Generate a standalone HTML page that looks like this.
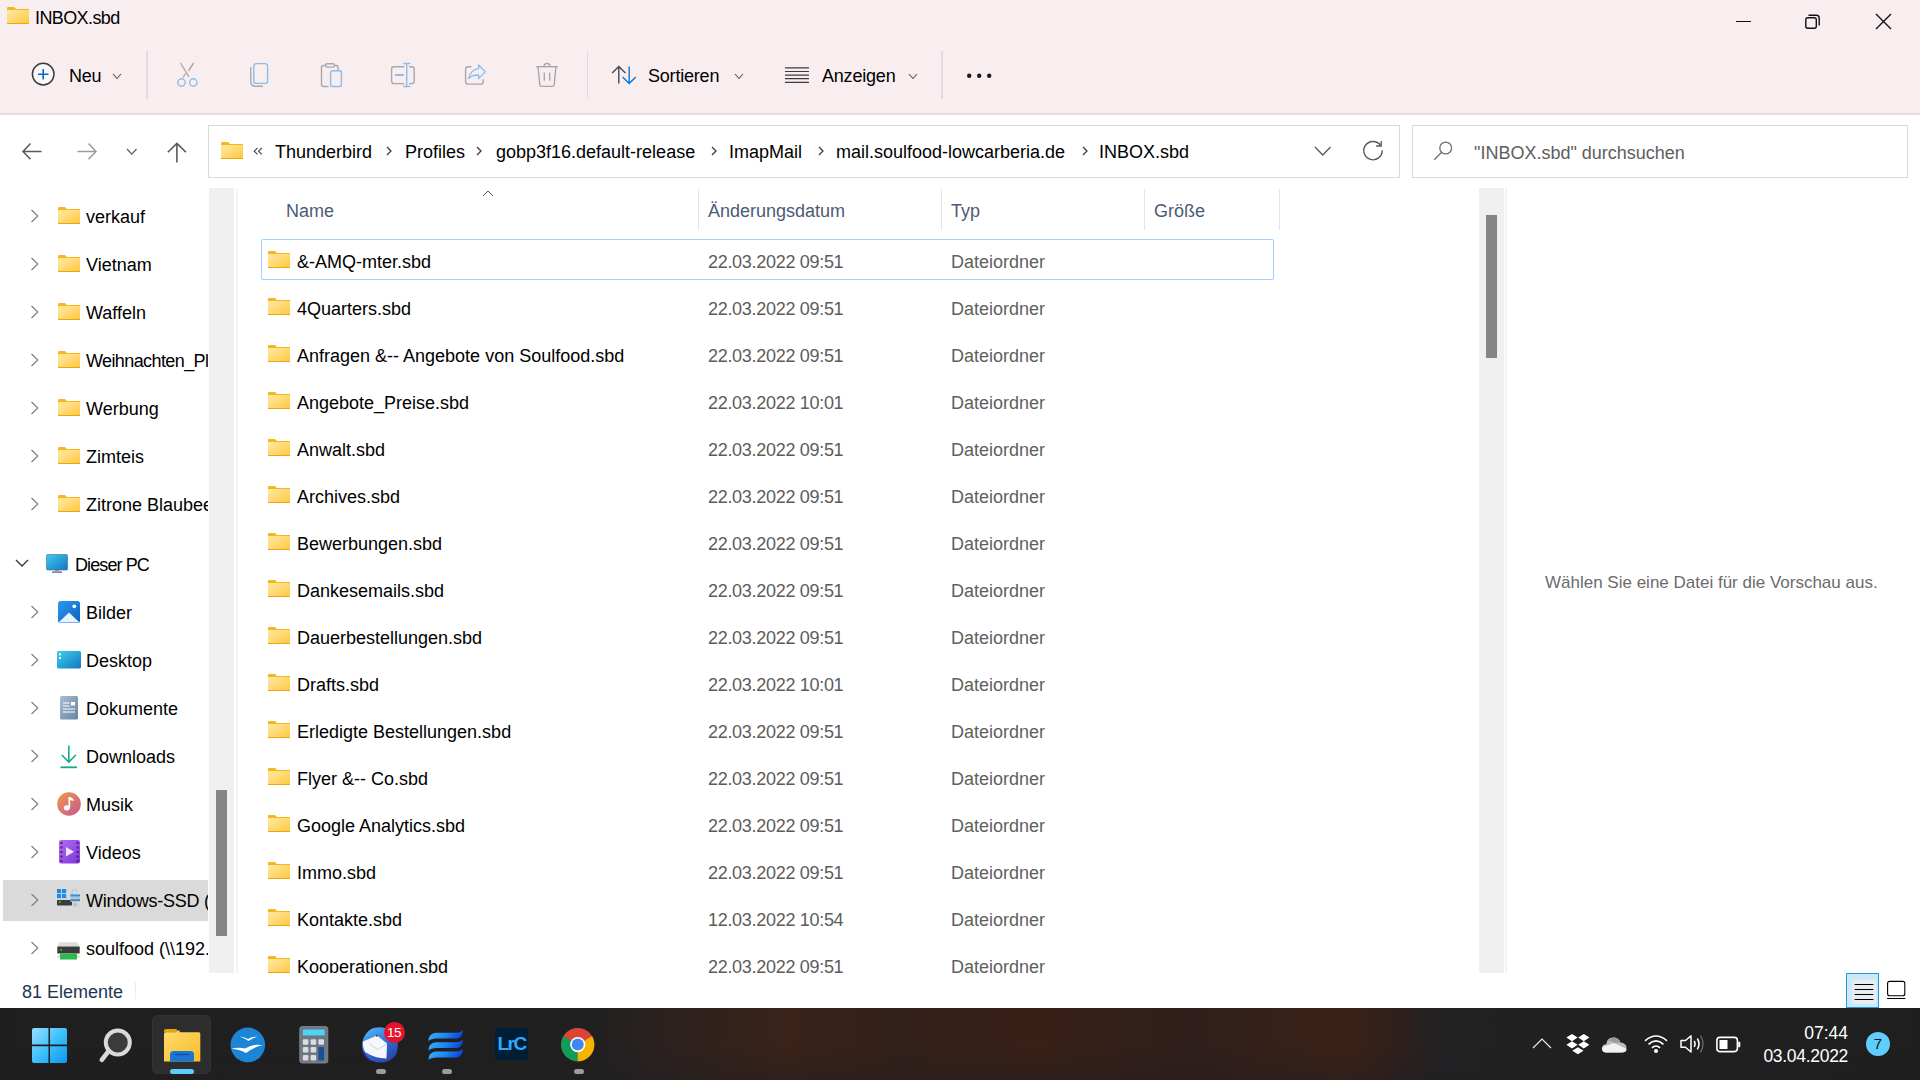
<!DOCTYPE html>
<html><head><meta charset="utf-8"><style>
html,body{margin:0;padding:0;width:1920px;height:1080px;overflow:hidden;background:#fff;font-family:"Liberation Sans",sans-serif}
.t{position:absolute;white-space:nowrap;line-height:20px;font-family:"Liberation Sans",sans-serif}
svg{overflow:visible}
</style></head><body>
<div style="position:absolute;left:0;top:0;width:1920px;height:113px;background:#F8EEF0"></div>
<div style="position:absolute;left:0;top:113px;width:1920px;height:2px;background:#E6DCDE"></div>
<svg style="position:absolute;left:7px;top:7px" width="22" height="17" viewBox="0 0 22 17"><defs><linearGradient id="fg7_7" x1="0" y1="0" x2="1" y2="1"><stop offset="0" stop-color="#FFE9A6"/><stop offset="1" stop-color="#FFC83D"/></linearGradient></defs><path d="M0 1.2 Q0 0 1.2 0 H7 L9 2 H22 V4 H0Z" fill="#F5B81C"/><rect x="0" y="3" width="22" height="14" rx="0.8" fill="url(#fg7_7)"/><rect x="0" y="16" width="22" height="1" fill="#E9A718"/></svg>
<div class="t" style="left:35px;top:8px;font-size:18px;color:#000;letter-spacing:-0.6px">INBOX.sbd</div>
<div style="position:absolute;left:1736px;top:21px;width:15px;height:1.3px;background:#111"></div>
<svg style="position:absolute;left:1800px;top:10px" width="26" height="24" viewBox="0 0 26 24"><rect x="5.8" y="7.8" width="10.5" height="10.5" rx="2" fill="none" stroke="#111" stroke-width="1.4"/><path d="M8.5 5.2 H16.5 Q19.2 5.2 19.2 8 V15.5" fill="none" stroke="#111" stroke-width="1.4"/></svg>
<svg style="position:absolute;left:1872px;top:10px" width="24" height="24" viewBox="0 0 24 24"><path d="M4 4 L19 19 M19 4 L4 19" stroke="#111" stroke-width="1.4"/></svg>
<svg style="position:absolute;left:30px;top:61px" width="27" height="27" viewBox="0 0 27 27"><circle cx="13.2" cy="13.1" r="10.8" fill="#FBF8F9" stroke="#3A3A3A" stroke-width="1.5"/><path d="M13.2 8 V18.5 M8 13.2 H18.5" stroke="#0B6CC9" stroke-width="1.6"/></svg>
<div class="t" style="left:69px;top:66px;font-size:18px;color:#000;letter-spacing:-0.3px">Neu</div>
<svg style="position:absolute;left:112px;top:72.5px" width="10" height="6.5" viewBox="-1 -1 10 6.5"><path d="M0 0 L4.0 4.5 L8 0" fill="none" stroke="#555" stroke-width="1.1"/></svg>
<div style="position:absolute;left:146px;top:51px;width:1.5px;height:48px;background:#E2DADC"></div>
<svg style="position:absolute;left:174px;top:60px" width="26" height="30" viewBox="0 0 26 30"><path d="M6.5 3 L15 17 M19.6 3 L14.5 11" stroke="#ABA7A8" stroke-width="1.4"/><path d="M11.5 13.5 L9 17.5" stroke="#ABA7A8" stroke-width="1.4"/><circle cx="7.5" cy="22.5" r="3.7" fill="none" stroke="#8CBDE8" stroke-width="1.4"/><circle cx="19.3" cy="22.5" r="3.7" fill="none" stroke="#8CBDE8" stroke-width="1.4"/></svg>
<svg style="position:absolute;left:246px;top:59px" width="28" height="30" viewBox="0 0 28 30"><path d="M4.8 8 V22.5 Q4.8 27.3 9.6 27.3 H17" fill="none" stroke="#ABA7A8" stroke-width="1.4"/><rect x="7.8" y="4.6" width="13.8" height="19.8" rx="2.4" fill="none" stroke="#8CBDE8" stroke-width="1.4"/></svg>
<svg style="position:absolute;left:316px;top:59px" width="30" height="30" viewBox="0 0 30 30"><path d="M12.5 27.5 H7.5 Q5.5 27.5 5.5 25.5 V8.5 Q5.5 6.5 7.5 6.5 H9.5 M18.5 6.5 H20 Q22 6.5 22 8.5 V11" fill="none" stroke="#ABA7A8" stroke-width="1.4"/><rect x="9.5" y="4.7" width="9" height="3.4" rx="1.7" fill="none" stroke="#ABA7A8" stroke-width="1.4"/><rect x="14.6" y="11.8" width="10.8" height="15.7" rx="1.8" fill="none" stroke="#8CBDE8" stroke-width="1.4"/></svg>
<svg style="position:absolute;left:388px;top:60px" width="30" height="30" viewBox="0 0 30 30"><path d="M16.3 6.7 H6 Q3.6 6.7 3.6 9.1 V21.2 Q3.6 23.6 6 23.6 H16.3 M21 6.7 H23.8 Q26.2 6.7 26.2 9.1 V21.2 Q26.2 23.6 23.8 23.6 H21" fill="none" stroke="#ABA7A8" stroke-width="1.4"/><path d="M18.7 3.5 V26.5 M15.2 3.5 H22.2 M15.2 26.5 H22.2" stroke="#8CBDE8" stroke-width="1.4"/><path d="M7 15 H15.7" stroke="#8CBDE8" stroke-width="2"/></svg>
<svg style="position:absolute;left:460px;top:60px" width="30" height="30" viewBox="0 0 30 30"><path d="M11.5 6.7 H8 Q5.6 6.7 5.6 9.1 V21.7 Q5.6 24.1 8 24.1 H20.8 Q23.2 24.1 23.2 21.7 V19.3" fill="none" stroke="#ABA7A8" stroke-width="1.4"/><path d="M18.6 5 L25.3 11.8 L18.6 18.6 V15 Q12 14.8 8.6 18.6 Q10 10 18.6 8.6 Z" fill="none" stroke="#8CBDE8" stroke-width="1.3" stroke-linejoin="round"/></svg>
<svg style="position:absolute;left:532px;top:59px" width="30" height="30" viewBox="0 0 30 30"><path d="M4.2 7.7 H25.8" stroke="#ABA7A8" stroke-width="1.4"/><path d="M12 7.5 Q12 4.5 15 4.5 Q18 4.5 18 7.5" fill="none" stroke="#ABA7A8" stroke-width="1.4"/><path d="M6 7.7 L7.8 25.6 Q8 27.4 9.8 27.4 H20.2 Q22 27.4 22.2 25.6 L24 7.7" fill="none" stroke="#ABA7A8" stroke-width="1.4"/><path d="M12.3 13.5 V21.8 M17.7 13.5 V21.8" stroke="#ABA7A8" stroke-width="1.4"/></svg>
<div style="position:absolute;left:586.5px;top:51px;width:1.5px;height:48px;background:#E2DADC"></div>
<svg style="position:absolute;left:608px;top:62px" width="32" height="26" viewBox="0 0 32 26"><path d="M10.8 4.5 V21.5 M4.2 11 L10.8 4.4 L17.4 11" fill="none" stroke="#474747" stroke-width="1.4"/><path d="M21.2 4.5 V21.5 M14.6 15 L21.2 21.6 L27.8 15" fill="none" stroke="#0A78D7" stroke-width="1.4"/></svg>
<div class="t" style="left:648px;top:66px;font-size:18px;color:#000;letter-spacing:-0.2px">Sortieren</div>
<svg style="position:absolute;left:733.5px;top:72.5px" width="10" height="6.5" viewBox="-1 -1 10 6.5"><path d="M0 0 L4.0 4.5 L8 0" fill="none" stroke="#555" stroke-width="1.1"/></svg>
<svg style="position:absolute;left:784px;top:64px" width="26" height="22" viewBox="0 0 26 22"><path d="M1 3.9 H25 M1 7.5 H25 M1 11.1 H25 M1 14.7 H25 M1 18.3 H25" stroke="#3A3A3A" stroke-width="1.2"/></svg>
<div class="t" style="left:822px;top:66px;font-size:18px;color:#000;letter-spacing:-0.2px">Anzeigen</div>
<svg style="position:absolute;left:907.5px;top:72.5px" width="10" height="6.5" viewBox="-1 -1 10 6.5"><path d="M0 0 L4.0 4.5 L8 0" fill="none" stroke="#555" stroke-width="1.1"/></svg>
<div style="position:absolute;left:941px;top:51px;width:1.5px;height:48px;background:#E2DADC"></div>
<svg style="position:absolute;left:964px;top:70px" width="32" height="12" viewBox="0 0 32 12"><circle cx="5.2" cy="5.8" r="2.2" fill="#1A1A1A"/><circle cx="15.2" cy="5.8" r="2.2" fill="#1A1A1A"/><circle cx="25.2" cy="5.8" r="2.2" fill="#1A1A1A"/></svg>
<div style="position:absolute;left:0;top:115px;width:1920px;height:893px;background:#FFFFFF"></div>
<svg style="position:absolute;left:18px;top:139px" width="28" height="26" viewBox="0 0 28 26"><path d="M5.5 12.4 H23.5 M12.5 4.5 L5 12.4 L12.5 20.3" fill="none" stroke="#595959" stroke-width="1.5"/></svg>
<svg style="position:absolute;left:72px;top:139px" width="28" height="26" viewBox="0 0 28 26"><path d="M5.5 12.4 H23.5 M16.5 4.5 L24 12.4 L16.5 20.3" fill="none" stroke="#9B9B9B" stroke-width="1.5"/></svg>
<svg style="position:absolute;left:125.5px;top:147.8px" width="11.5" height="7.2" viewBox="-1 -1 11.5 7.2"><path d="M0 0 L4.75 5.2 L9.5 0" fill="none" stroke="#5A5A5A" stroke-width="1.2"/></svg>
<svg style="position:absolute;left:163px;top:139px" width="28" height="28" viewBox="0 0 28 28"><path d="M13.9 4.5 V23.5 M4.8 13.3 L13.9 4.4 L23 13.3" fill="none" stroke="#595959" stroke-width="1.6"/></svg>
<div style="position:absolute;left:208px;top:125px;width:1190px;height:51px;border:1.2px solid #D9D9D9;background:#FFF"></div>
<svg style="position:absolute;left:221px;top:142px" width="22" height="17" viewBox="0 0 22 17"><defs><linearGradient id="fg221_142" x1="0" y1="0" x2="1" y2="1"><stop offset="0" stop-color="#FFE9A6"/><stop offset="1" stop-color="#FFC83D"/></linearGradient></defs><path d="M0 1.2 Q0 0 1.2 0 H7 L9 2 H22 V4 H0Z" fill="#F5B81C"/><rect x="0" y="3" width="22" height="14" rx="0.8" fill="url(#fg221_142)"/><rect x="0" y="16" width="22" height="1" fill="#E9A718"/></svg>
<svg style="position:absolute;left:253px;top:147px" width="10" height="9" viewBox="0 0 10 9"><path d="M4.5 1 L1.2 4.2 L4.5 7.4 M8.8 1 L5.5 4.2 L8.8 7.4" fill="none" stroke="#444" stroke-width="1.1"/></svg>
<div class="t" style="left:275px;top:141.5px;font-size:18px;color:#000;">Thunderbird</div>
<div class="t" style="left:405px;top:141.5px;font-size:18px;color:#000;">Profiles</div>
<div class="t" style="left:496px;top:141.5px;font-size:18px;color:#000;">gobp3f16.default-release</div>
<div class="t" style="left:729px;top:141.5px;font-size:18px;color:#000;">ImapMail</div>
<div class="t" style="left:836px;top:141.5px;font-size:18px;color:#000;">mail.soulfood-lowcarberia.de</div>
<div class="t" style="left:1099px;top:141.5px;font-size:18px;color:#000;">INBOX.sbd</div>
<svg style="position:absolute;left:384px;top:144px" width="10" height="14" viewBox="0 0 10 14"><path d="M3 3 L7 7 L3 11" fill="none" stroke="#3C3C3C" stroke-width="1.3"/></svg>
<svg style="position:absolute;left:474px;top:144px" width="10" height="14" viewBox="0 0 10 14"><path d="M3 3 L7 7 L3 11" fill="none" stroke="#3C3C3C" stroke-width="1.3"/></svg>
<svg style="position:absolute;left:709px;top:144px" width="10" height="14" viewBox="0 0 10 14"><path d="M3 3 L7 7 L3 11" fill="none" stroke="#3C3C3C" stroke-width="1.3"/></svg>
<svg style="position:absolute;left:816px;top:144px" width="10" height="14" viewBox="0 0 10 14"><path d="M3 3 L7 7 L3 11" fill="none" stroke="#3C3C3C" stroke-width="1.3"/></svg>
<svg style="position:absolute;left:1080px;top:144px" width="10" height="14" viewBox="0 0 10 14"><path d="M3 3 L7 7 L3 11" fill="none" stroke="#3C3C3C" stroke-width="1.3"/></svg>
<svg style="position:absolute;left:1314px;top:146.2px" width="17.5" height="10" viewBox="-1 -1 17.5 10"><path d="M0 0 L7.75 8 L15.5 0" fill="none" stroke="#5A5A5A" stroke-width="1.3"/></svg>
<svg style="position:absolute;left:1360px;top:137px" width="26" height="26" viewBox="0 0 26 26"><path d="M20.5 8.3 A9.2 9.2 0 1 0 22.2 13.3" fill="none" stroke="#5A5A5A" stroke-width="1.4"/><path d="M21.2 4 V9 H16.2" fill="none" stroke="#5A5A5A" stroke-width="1.4"/></svg>
<div style="position:absolute;left:1412px;top:125px;width:1494px;height:51px;border:1.2px solid #D9D9D9;background:#FFF;width:494px"></div>
<svg style="position:absolute;left:1430px;top:138px" width="26" height="26" viewBox="0 0 26 26"><circle cx="15.7" cy="10" r="5.9" fill="none" stroke="#707070" stroke-width="1.3"/><path d="M11.6 14.3 L4.3 21.7" stroke="#707070" stroke-width="1.4"/></svg>
<div class="t" style="left:1474px;top:142.5px;font-size:18px;color:#5E5E5E;">"INBOX.sbd" durchsuchen</div>
<div style="position:absolute;left:0;top:188px;width:208px;height:785px;overflow:hidden">
<div style="position:absolute;left:3px;top:692px;width:205px;height:41px;background:#DADADA"></div>
<svg style="position:absolute;left:28px;top:20px" width="14" height="16" viewBox="0 0 14 16"><path d="M3.5 2 L9.8 8 L3.5 14" fill="none" stroke="#808080" stroke-width="1.2"/></svg>
<svg style="position:absolute;left:58px;top:19px" width="22" height="17" viewBox="0 0 22 17"><defs><linearGradient id="fg58_19" x1="0" y1="0" x2="1" y2="1"><stop offset="0" stop-color="#FFE9A6"/><stop offset="1" stop-color="#FFC83D"/></linearGradient></defs><path d="M0 1.2 Q0 0 1.2 0 H7 L9 2 H22 V4 H0Z" fill="#F5B81C"/><rect x="0" y="3" width="22" height="14" rx="0.8" fill="url(#fg58_19)"/><rect x="0" y="16" width="22" height="1" fill="#E9A718"/></svg>
<div class="t" style="left:86px;top:19px;font-size:18px;color:#000;">verkauf</div>
<svg style="position:absolute;left:28px;top:68px" width="14" height="16" viewBox="0 0 14 16"><path d="M3.5 2 L9.8 8 L3.5 14" fill="none" stroke="#808080" stroke-width="1.2"/></svg>
<svg style="position:absolute;left:58px;top:67px" width="22" height="17" viewBox="0 0 22 17"><defs><linearGradient id="fg58_67" x1="0" y1="0" x2="1" y2="1"><stop offset="0" stop-color="#FFE9A6"/><stop offset="1" stop-color="#FFC83D"/></linearGradient></defs><path d="M0 1.2 Q0 0 1.2 0 H7 L9 2 H22 V4 H0Z" fill="#F5B81C"/><rect x="0" y="3" width="22" height="14" rx="0.8" fill="url(#fg58_67)"/><rect x="0" y="16" width="22" height="1" fill="#E9A718"/></svg>
<div class="t" style="left:86px;top:67px;font-size:18px;color:#000;">Vietnam</div>
<svg style="position:absolute;left:28px;top:116px" width="14" height="16" viewBox="0 0 14 16"><path d="M3.5 2 L9.8 8 L3.5 14" fill="none" stroke="#808080" stroke-width="1.2"/></svg>
<svg style="position:absolute;left:58px;top:115px" width="22" height="17" viewBox="0 0 22 17"><defs><linearGradient id="fg58_115" x1="0" y1="0" x2="1" y2="1"><stop offset="0" stop-color="#FFE9A6"/><stop offset="1" stop-color="#FFC83D"/></linearGradient></defs><path d="M0 1.2 Q0 0 1.2 0 H7 L9 2 H22 V4 H0Z" fill="#F5B81C"/><rect x="0" y="3" width="22" height="14" rx="0.8" fill="url(#fg58_115)"/><rect x="0" y="16" width="22" height="1" fill="#E9A718"/></svg>
<div class="t" style="left:86px;top:115px;font-size:18px;color:#000;">Waffeln</div>
<svg style="position:absolute;left:28px;top:164px" width="14" height="16" viewBox="0 0 14 16"><path d="M3.5 2 L9.8 8 L3.5 14" fill="none" stroke="#808080" stroke-width="1.2"/></svg>
<svg style="position:absolute;left:58px;top:163px" width="22" height="17" viewBox="0 0 22 17"><defs><linearGradient id="fg58_163" x1="0" y1="0" x2="1" y2="1"><stop offset="0" stop-color="#FFE9A6"/><stop offset="1" stop-color="#FFC83D"/></linearGradient></defs><path d="M0 1.2 Q0 0 1.2 0 H7 L9 2 H22 V4 H0Z" fill="#F5B81C"/><rect x="0" y="3" width="22" height="14" rx="0.8" fill="url(#fg58_163)"/><rect x="0" y="16" width="22" height="1" fill="#E9A718"/></svg>
<div class="t" style="left:86px;top:163px;font-size:18px;color:#000;letter-spacing:-0.6px">Weihnachten_Plätzchen</div>
<svg style="position:absolute;left:28px;top:212px" width="14" height="16" viewBox="0 0 14 16"><path d="M3.5 2 L9.8 8 L3.5 14" fill="none" stroke="#808080" stroke-width="1.2"/></svg>
<svg style="position:absolute;left:58px;top:211px" width="22" height="17" viewBox="0 0 22 17"><defs><linearGradient id="fg58_211" x1="0" y1="0" x2="1" y2="1"><stop offset="0" stop-color="#FFE9A6"/><stop offset="1" stop-color="#FFC83D"/></linearGradient></defs><path d="M0 1.2 Q0 0 1.2 0 H7 L9 2 H22 V4 H0Z" fill="#F5B81C"/><rect x="0" y="3" width="22" height="14" rx="0.8" fill="url(#fg58_211)"/><rect x="0" y="16" width="22" height="1" fill="#E9A718"/></svg>
<div class="t" style="left:86px;top:211px;font-size:18px;color:#000;">Werbung</div>
<svg style="position:absolute;left:28px;top:260px" width="14" height="16" viewBox="0 0 14 16"><path d="M3.5 2 L9.8 8 L3.5 14" fill="none" stroke="#808080" stroke-width="1.2"/></svg>
<svg style="position:absolute;left:58px;top:259px" width="22" height="17" viewBox="0 0 22 17"><defs><linearGradient id="fg58_259" x1="0" y1="0" x2="1" y2="1"><stop offset="0" stop-color="#FFE9A6"/><stop offset="1" stop-color="#FFC83D"/></linearGradient></defs><path d="M0 1.2 Q0 0 1.2 0 H7 L9 2 H22 V4 H0Z" fill="#F5B81C"/><rect x="0" y="3" width="22" height="14" rx="0.8" fill="url(#fg58_259)"/><rect x="0" y="16" width="22" height="1" fill="#E9A718"/></svg>
<div class="t" style="left:86px;top:259px;font-size:18px;color:#000;">Zimteis</div>
<svg style="position:absolute;left:28px;top:308px" width="14" height="16" viewBox="0 0 14 16"><path d="M3.5 2 L9.8 8 L3.5 14" fill="none" stroke="#808080" stroke-width="1.2"/></svg>
<svg style="position:absolute;left:58px;top:307px" width="22" height="17" viewBox="0 0 22 17"><defs><linearGradient id="fg58_307" x1="0" y1="0" x2="1" y2="1"><stop offset="0" stop-color="#FFE9A6"/><stop offset="1" stop-color="#FFC83D"/></linearGradient></defs><path d="M0 1.2 Q0 0 1.2 0 H7 L9 2 H22 V4 H0Z" fill="#F5B81C"/><rect x="0" y="3" width="22" height="14" rx="0.8" fill="url(#fg58_307)"/><rect x="0" y="16" width="22" height="1" fill="#E9A718"/></svg>
<div class="t" style="left:86px;top:307px;font-size:18px;color:#000;">Zitrone Blaubeere</div>
<svg style="position:absolute;left:14px;top:370px" width="16" height="10" viewBox="0 0 16 10"><path d="M2 2 L8 8 L14 2" fill="none" stroke="#333" stroke-width="1.3"/></svg>
<svg style="position:absolute;left:46px;top:366px" width="22" height="19" viewBox="0 0 22 19"><defs><linearGradient id="pcg" x1="0" y1="0" x2="1" y2="1"><stop offset="0" stop-color="#3CCDEB"/><stop offset="1" stop-color="#1473C9"/></linearGradient></defs><rect x="0.5" y="0.5" width="21" height="15.5" rx="1" fill="url(#pcg)" stroke="#3a6f8a" stroke-width="0.6"/><rect x="9" y="16" width="4" height="1.5" fill="#8a99a6"/><rect x="6" y="17.3" width="10" height="1.7" fill="#7d8c99"/></svg>
<div class="t" style="left:75px;top:367px;font-size:18px;color:#000;letter-spacing:-0.9px">Dieser PC</div>
<svg style="position:absolute;left:28px;top:416px" width="14" height="16" viewBox="0 0 14 16"><path d="M3.5 2 L9.8 8 L3.5 14" fill="none" stroke="#808080" stroke-width="1.2"/></svg>
<div style="position:absolute;left:58px;top:413px;line-height:0"><svg width="22" height="22" viewBox="0 0 22 22"><defs><linearGradient id="big" x1="0" y1="0" x2="1" y2="1"><stop offset="0" stop-color="#2B9CF0"/><stop offset="1" stop-color="#0A5FC0"/></linearGradient></defs><rect x="0" y="0" width="22" height="22" rx="2.5" fill="url(#big)"/><circle cx="16.3" cy="5.3" r="1.9" fill="#fff"/><path d="M0.5 21.5 L11 11.5 L21.5 21.5Z" fill="#E8F2FB"/></svg></div>
<div class="t" style="left:86px;top:415px;font-size:18px;color:#000;">Bilder</div>
<svg style="position:absolute;left:28px;top:464px" width="14" height="16" viewBox="0 0 14 16"><path d="M3.5 2 L9.8 8 L3.5 14" fill="none" stroke="#808080" stroke-width="1.2"/></svg>
<div style="position:absolute;left:57px;top:463px;line-height:0"><svg width="24" height="18" viewBox="0 0 24 18"><defs><linearGradient id="dkg" x1="0" y1="0" x2="1" y2="1"><stop offset="0" stop-color="#3ED0E8"/><stop offset="1" stop-color="#1277C4"/></linearGradient></defs><rect x="0" y="0" width="24" height="17.5" rx="1.5" fill="url(#dkg)"/><rect x="2" y="2.3" width="2" height="2" fill="#fff"/><rect x="2" y="6" width="2" height="2" fill="#fff"/></svg></div>
<div class="t" style="left:86px;top:463px;font-size:18px;color:#000;">Desktop</div>
<svg style="position:absolute;left:28px;top:512px" width="14" height="16" viewBox="0 0 14 16"><path d="M3.5 2 L9.8 8 L3.5 14" fill="none" stroke="#808080" stroke-width="1.2"/></svg>
<div style="position:absolute;left:60px;top:508px;line-height:0"><svg width="18" height="24" viewBox="0 0 18 24"><defs><linearGradient id="dog" x1="0" y1="0" x2="1" y2="1"><stop offset="0" stop-color="#A9BDD3"/><stop offset="1" stop-color="#6883A3"/></linearGradient></defs><rect x="0" y="0" width="18" height="23.5" rx="1.5" fill="url(#dog)"/><rect x="11" y="6" width="4" height="3.5" fill="#fff"/><path d="M3 7 H9.5 M3 10 H9.5 M3 13 H15 M3 16 H15" stroke="#fff" stroke-width="1"/></svg></div>
<div class="t" style="left:86px;top:511px;font-size:18px;color:#000;">Dokumente</div>
<svg style="position:absolute;left:28px;top:560px" width="14" height="16" viewBox="0 0 14 16"><path d="M3.5 2 L9.8 8 L3.5 14" fill="none" stroke="#808080" stroke-width="1.2"/></svg>
<div style="position:absolute;left:60px;top:557px;line-height:0"><svg width="18" height="24" viewBox="0 0 18 24"><path d="M8.8 0.5 V17 M1.8 10 L8.8 17 L15.8 10" fill="none" stroke="#17AA8C" stroke-width="1.6"/><path d="M0.5 22.3 H17" stroke="#17AA8C" stroke-width="1.8"/></svg></div>
<div class="t" style="left:86px;top:559px;font-size:18px;color:#000;">Downloads</div>
<svg style="position:absolute;left:28px;top:608px" width="14" height="16" viewBox="0 0 14 16"><path d="M3.5 2 L9.8 8 L3.5 14" fill="none" stroke="#808080" stroke-width="1.2"/></svg>
<div style="position:absolute;left:57px;top:604px;line-height:0"><svg width="24" height="24" viewBox="0 0 24 24"><defs><linearGradient id="mug" x1="0" y1="0" x2="1" y2="1"><stop offset="0" stop-color="#F59A4A"/><stop offset="1" stop-color="#C4568E"/></linearGradient></defs><circle cx="12" cy="12" r="11.8" fill="url(#mug)"/><path d="M12.3 5 V15.5" stroke="#fff" stroke-width="1.8"/><path d="M12.3 5 Q16.5 5.5 16.8 9 Q14.8 8 12.3 8.3Z" fill="#fff"/><ellipse cx="9.8" cy="15.8" rx="3" ry="2.6" fill="#fff"/></svg></div>
<div class="t" style="left:86px;top:607px;font-size:18px;color:#000;">Musik</div>
<svg style="position:absolute;left:28px;top:656px" width="14" height="16" viewBox="0 0 14 16"><path d="M3.5 2 L9.8 8 L3.5 14" fill="none" stroke="#808080" stroke-width="1.2"/></svg>
<div style="position:absolute;left:59px;top:652px;line-height:0"><svg width="21" height="24" viewBox="0 0 21 24"><defs><linearGradient id="vig" x1="0" y1="0" x2="1" y2="1"><stop offset="0" stop-color="#B56CF0"/><stop offset="1" stop-color="#7A37D8"/></linearGradient></defs><rect x="0" y="0" width="21" height="23.5" rx="2" fill="url(#vig)"/><rect x="1.5" y="2" width="2" height="2" fill="#4B1F88"/><rect x="1.5" y="6.5" width="2" height="2" fill="#4B1F88"/><rect x="1.5" y="11" width="2" height="2" fill="#4B1F88"/><rect x="1.5" y="15.5" width="2" height="2" fill="#4B1F88"/><rect x="1.5" y="20" width="2" height="2" fill="#4B1F88"/><rect x="17.5" y="2" width="2" height="2" fill="#4B1F88"/><rect x="17.5" y="6.5" width="2" height="2" fill="#4B1F88"/><rect x="17.5" y="11" width="2" height="2" fill="#4B1F88"/><rect x="17.5" y="15.5" width="2" height="2" fill="#4B1F88"/><rect x="17.5" y="20" width="2" height="2" fill="#4B1F88"/><path d="M7 7 L15 11.8 L7 16.6Z" fill="#EEE6FA"/></svg></div>
<div class="t" style="left:86px;top:655px;font-size:18px;color:#000;">Videos</div>
<svg style="position:absolute;left:28px;top:704px" width="14" height="16" viewBox="0 0 14 16"><path d="M3.5 2 L9.8 8 L3.5 14" fill="none" stroke="#808080" stroke-width="1.2"/></svg>
<div style="position:absolute;left:57px;top:701px;line-height:0"><svg width="24" height="18" viewBox="0 0 24 18"><rect x="0" y="0" width="4.2" height="4.2" fill="#1A90E8"/><rect x="5" y="0" width="4.2" height="4.2" fill="#1A90E8"/><rect x="0" y="5" width="4.2" height="4.2" fill="#1A90E8"/><rect x="5" y="5" width="4.2" height="4.2" fill="#1A90E8"/><rect x="0" y="10" width="15" height="6.5" rx="0.8" fill="#3B3B3B"/><rect x="0" y="9.6" width="15" height="1.4" fill="#D7D7D7"/><rect x="2" y="12.2" width="1.6" height="1.6" fill="#39D353"/><path d="M15 5.5 V3 Q15 0.5 17.5 0.5 Q20 0.5 20 3" fill="none" stroke="#A9C6E0" stroke-width="1"/><rect x="13.5" y="5" width="9.5" height="8" rx="1" fill="#B7C3CF"/><rect x="13.5" y="5.6" width="9.5" height="1.8" fill="#2E8FE0"/><rect x="13.5" y="10.2" width="9.5" height="1.8" fill="#2E8FE0"/><circle cx="18.2" cy="15.6" r="2.4" fill="#C0C5CA"/></svg></div>
<div class="t" style="left:86px;top:703px;font-size:18px;color:#000;letter-spacing:-0.25px">Windows-SSD (C:)</div>
<svg style="position:absolute;left:28px;top:752px" width="14" height="16" viewBox="0 0 14 16"><path d="M3.5 2 L9.8 8 L3.5 14" fill="none" stroke="#808080" stroke-width="1.2"/></svg>
<div style="position:absolute;left:57px;top:754px;line-height:0"><svg width="23" height="18" viewBox="0 0 23 18"><path d="M2.5 0.3 H20.5 L22.5 4.5 H0.5Z" fill="#DDDDDD"/><rect x="0.3" y="4.5" width="22.4" height="7" fill="#3A3A3A"/><rect x="3.2" y="7" width="1.6" height="1.6" fill="#39D353"/><rect x="0" y="13.5" width="23" height="2" fill="#DCDCDC"/><rect x="3" y="11.5" width="17" height="6" rx="0.6" fill="#2FB84F"/></svg></div>
<div class="t" style="left:86px;top:751px;font-size:18px;color:#000;">soulfood (\\192.168.178.20)</div>
</div>
<div style="position:absolute;left:209px;top:188px;width:25px;height:785px;background:#F0F0F0"></div>
<div style="position:absolute;left:216px;top:790px;width:11px;height:146px;background:#858585"></div>
<div style="position:absolute;left:236px;top:188px;width:2px;height:785px;background:#F5F5F5"></div>
<div style="position:absolute;left:481.5px;top:188.5px;line-height:0"><svg width="12" height="9" viewBox="0 0 12 9"><path d="M1 7 L6 2 L11 7" fill="none" stroke="#555" stroke-width="1"/></svg></div>
<div class="t" style="left:286px;top:201px;font-size:18px;color:#4C5B74;">Name</div>
<div class="t" style="left:708px;top:201px;font-size:18px;color:#4C5B74;">Änderungsdatum</div>
<div class="t" style="left:951px;top:201px;font-size:18px;color:#4C5B74;">Typ</div>
<div class="t" style="left:1154px;top:201px;font-size:18px;color:#4C5B74;">Größe</div>
<div style="position:absolute;left:698px;top:189px;width:1px;height:41px;background:#E5E5E5"></div>
<div style="position:absolute;left:941px;top:189px;width:1px;height:41px;background:#E5E5E5"></div>
<div style="position:absolute;left:1144px;top:189px;width:1px;height:41px;background:#E5E5E5"></div>
<div style="position:absolute;left:1279px;top:189px;width:1px;height:41px;background:#E5E5E5"></div>
<div style="position:absolute;left:261px;top:239px;width:1011px;height:39px;border:1.2px solid #9FD0FF;border-radius:2px"></div>
<div style="position:absolute;left:240px;top:188px;width:1238px;height:785px;overflow:hidden">
<svg style="position:absolute;left:28px;top:63px" width="22" height="17" viewBox="0 0 22 17"><defs><linearGradient id="fg28_63" x1="0" y1="0" x2="1" y2="1"><stop offset="0" stop-color="#FFE9A6"/><stop offset="1" stop-color="#FFC83D"/></linearGradient></defs><path d="M0 1.2 Q0 0 1.2 0 H7 L9 2 H22 V4 H0Z" fill="#F5B81C"/><rect x="0" y="3" width="22" height="14" rx="0.8" fill="url(#fg28_63)"/><rect x="0" y="16" width="22" height="1" fill="#E9A718"/></svg>
<div class="t" style="left:57px;top:64px;font-size:18px;color:#000;">&amp;-AMQ-mter.sbd</div>
<div class="t" style="left:468px;top:64px;font-size:18px;color:#5C5C5C;letter-spacing:-0.3px">22.03.2022 09:51</div>
<div class="t" style="left:711px;top:64px;font-size:18px;color:#606060;">Dateiordner</div>
<svg style="position:absolute;left:28px;top:110px" width="22" height="17" viewBox="0 0 22 17"><defs><linearGradient id="fg28_110" x1="0" y1="0" x2="1" y2="1"><stop offset="0" stop-color="#FFE9A6"/><stop offset="1" stop-color="#FFC83D"/></linearGradient></defs><path d="M0 1.2 Q0 0 1.2 0 H7 L9 2 H22 V4 H0Z" fill="#F5B81C"/><rect x="0" y="3" width="22" height="14" rx="0.8" fill="url(#fg28_110)"/><rect x="0" y="16" width="22" height="1" fill="#E9A718"/></svg>
<div class="t" style="left:57px;top:111px;font-size:18px;color:#000;">4Quarters.sbd</div>
<div class="t" style="left:468px;top:111px;font-size:18px;color:#5C5C5C;letter-spacing:-0.3px">22.03.2022 09:51</div>
<div class="t" style="left:711px;top:111px;font-size:18px;color:#606060;">Dateiordner</div>
<svg style="position:absolute;left:28px;top:157px" width="22" height="17" viewBox="0 0 22 17"><defs><linearGradient id="fg28_157" x1="0" y1="0" x2="1" y2="1"><stop offset="0" stop-color="#FFE9A6"/><stop offset="1" stop-color="#FFC83D"/></linearGradient></defs><path d="M0 1.2 Q0 0 1.2 0 H7 L9 2 H22 V4 H0Z" fill="#F5B81C"/><rect x="0" y="3" width="22" height="14" rx="0.8" fill="url(#fg28_157)"/><rect x="0" y="16" width="22" height="1" fill="#E9A718"/></svg>
<div class="t" style="left:57px;top:158px;font-size:18px;color:#000;">Anfragen &amp;-- Angebote von Soulfood.sbd</div>
<div class="t" style="left:468px;top:158px;font-size:18px;color:#5C5C5C;letter-spacing:-0.3px">22.03.2022 09:51</div>
<div class="t" style="left:711px;top:158px;font-size:18px;color:#606060;">Dateiordner</div>
<svg style="position:absolute;left:28px;top:204px" width="22" height="17" viewBox="0 0 22 17"><defs><linearGradient id="fg28_204" x1="0" y1="0" x2="1" y2="1"><stop offset="0" stop-color="#FFE9A6"/><stop offset="1" stop-color="#FFC83D"/></linearGradient></defs><path d="M0 1.2 Q0 0 1.2 0 H7 L9 2 H22 V4 H0Z" fill="#F5B81C"/><rect x="0" y="3" width="22" height="14" rx="0.8" fill="url(#fg28_204)"/><rect x="0" y="16" width="22" height="1" fill="#E9A718"/></svg>
<div class="t" style="left:57px;top:205px;font-size:18px;color:#000;">Angebote_Preise.sbd</div>
<div class="t" style="left:468px;top:205px;font-size:18px;color:#5C5C5C;letter-spacing:-0.3px">22.03.2022 10:01</div>
<div class="t" style="left:711px;top:205px;font-size:18px;color:#606060;">Dateiordner</div>
<svg style="position:absolute;left:28px;top:251px" width="22" height="17" viewBox="0 0 22 17"><defs><linearGradient id="fg28_251" x1="0" y1="0" x2="1" y2="1"><stop offset="0" stop-color="#FFE9A6"/><stop offset="1" stop-color="#FFC83D"/></linearGradient></defs><path d="M0 1.2 Q0 0 1.2 0 H7 L9 2 H22 V4 H0Z" fill="#F5B81C"/><rect x="0" y="3" width="22" height="14" rx="0.8" fill="url(#fg28_251)"/><rect x="0" y="16" width="22" height="1" fill="#E9A718"/></svg>
<div class="t" style="left:57px;top:252px;font-size:18px;color:#000;">Anwalt.sbd</div>
<div class="t" style="left:468px;top:252px;font-size:18px;color:#5C5C5C;letter-spacing:-0.3px">22.03.2022 09:51</div>
<div class="t" style="left:711px;top:252px;font-size:18px;color:#606060;">Dateiordner</div>
<svg style="position:absolute;left:28px;top:298px" width="22" height="17" viewBox="0 0 22 17"><defs><linearGradient id="fg28_298" x1="0" y1="0" x2="1" y2="1"><stop offset="0" stop-color="#FFE9A6"/><stop offset="1" stop-color="#FFC83D"/></linearGradient></defs><path d="M0 1.2 Q0 0 1.2 0 H7 L9 2 H22 V4 H0Z" fill="#F5B81C"/><rect x="0" y="3" width="22" height="14" rx="0.8" fill="url(#fg28_298)"/><rect x="0" y="16" width="22" height="1" fill="#E9A718"/></svg>
<div class="t" style="left:57px;top:299px;font-size:18px;color:#000;">Archives.sbd</div>
<div class="t" style="left:468px;top:299px;font-size:18px;color:#5C5C5C;letter-spacing:-0.3px">22.03.2022 09:51</div>
<div class="t" style="left:711px;top:299px;font-size:18px;color:#606060;">Dateiordner</div>
<svg style="position:absolute;left:28px;top:345px" width="22" height="17" viewBox="0 0 22 17"><defs><linearGradient id="fg28_345" x1="0" y1="0" x2="1" y2="1"><stop offset="0" stop-color="#FFE9A6"/><stop offset="1" stop-color="#FFC83D"/></linearGradient></defs><path d="M0 1.2 Q0 0 1.2 0 H7 L9 2 H22 V4 H0Z" fill="#F5B81C"/><rect x="0" y="3" width="22" height="14" rx="0.8" fill="url(#fg28_345)"/><rect x="0" y="16" width="22" height="1" fill="#E9A718"/></svg>
<div class="t" style="left:57px;top:346px;font-size:18px;color:#000;">Bewerbungen.sbd</div>
<div class="t" style="left:468px;top:346px;font-size:18px;color:#5C5C5C;letter-spacing:-0.3px">22.03.2022 09:51</div>
<div class="t" style="left:711px;top:346px;font-size:18px;color:#606060;">Dateiordner</div>
<svg style="position:absolute;left:28px;top:392px" width="22" height="17" viewBox="0 0 22 17"><defs><linearGradient id="fg28_392" x1="0" y1="0" x2="1" y2="1"><stop offset="0" stop-color="#FFE9A6"/><stop offset="1" stop-color="#FFC83D"/></linearGradient></defs><path d="M0 1.2 Q0 0 1.2 0 H7 L9 2 H22 V4 H0Z" fill="#F5B81C"/><rect x="0" y="3" width="22" height="14" rx="0.8" fill="url(#fg28_392)"/><rect x="0" y="16" width="22" height="1" fill="#E9A718"/></svg>
<div class="t" style="left:57px;top:393px;font-size:18px;color:#000;">Dankesemails.sbd</div>
<div class="t" style="left:468px;top:393px;font-size:18px;color:#5C5C5C;letter-spacing:-0.3px">22.03.2022 09:51</div>
<div class="t" style="left:711px;top:393px;font-size:18px;color:#606060;">Dateiordner</div>
<svg style="position:absolute;left:28px;top:439px" width="22" height="17" viewBox="0 0 22 17"><defs><linearGradient id="fg28_439" x1="0" y1="0" x2="1" y2="1"><stop offset="0" stop-color="#FFE9A6"/><stop offset="1" stop-color="#FFC83D"/></linearGradient></defs><path d="M0 1.2 Q0 0 1.2 0 H7 L9 2 H22 V4 H0Z" fill="#F5B81C"/><rect x="0" y="3" width="22" height="14" rx="0.8" fill="url(#fg28_439)"/><rect x="0" y="16" width="22" height="1" fill="#E9A718"/></svg>
<div class="t" style="left:57px;top:440px;font-size:18px;color:#000;">Dauerbestellungen.sbd</div>
<div class="t" style="left:468px;top:440px;font-size:18px;color:#5C5C5C;letter-spacing:-0.3px">22.03.2022 09:51</div>
<div class="t" style="left:711px;top:440px;font-size:18px;color:#606060;">Dateiordner</div>
<svg style="position:absolute;left:28px;top:486px" width="22" height="17" viewBox="0 0 22 17"><defs><linearGradient id="fg28_486" x1="0" y1="0" x2="1" y2="1"><stop offset="0" stop-color="#FFE9A6"/><stop offset="1" stop-color="#FFC83D"/></linearGradient></defs><path d="M0 1.2 Q0 0 1.2 0 H7 L9 2 H22 V4 H0Z" fill="#F5B81C"/><rect x="0" y="3" width="22" height="14" rx="0.8" fill="url(#fg28_486)"/><rect x="0" y="16" width="22" height="1" fill="#E9A718"/></svg>
<div class="t" style="left:57px;top:487px;font-size:18px;color:#000;">Drafts.sbd</div>
<div class="t" style="left:468px;top:487px;font-size:18px;color:#5C5C5C;letter-spacing:-0.3px">22.03.2022 10:01</div>
<div class="t" style="left:711px;top:487px;font-size:18px;color:#606060;">Dateiordner</div>
<svg style="position:absolute;left:28px;top:533px" width="22" height="17" viewBox="0 0 22 17"><defs><linearGradient id="fg28_533" x1="0" y1="0" x2="1" y2="1"><stop offset="0" stop-color="#FFE9A6"/><stop offset="1" stop-color="#FFC83D"/></linearGradient></defs><path d="M0 1.2 Q0 0 1.2 0 H7 L9 2 H22 V4 H0Z" fill="#F5B81C"/><rect x="0" y="3" width="22" height="14" rx="0.8" fill="url(#fg28_533)"/><rect x="0" y="16" width="22" height="1" fill="#E9A718"/></svg>
<div class="t" style="left:57px;top:534px;font-size:18px;color:#000;">Erledigte Bestellungen.sbd</div>
<div class="t" style="left:468px;top:534px;font-size:18px;color:#5C5C5C;letter-spacing:-0.3px">22.03.2022 09:51</div>
<div class="t" style="left:711px;top:534px;font-size:18px;color:#606060;">Dateiordner</div>
<svg style="position:absolute;left:28px;top:580px" width="22" height="17" viewBox="0 0 22 17"><defs><linearGradient id="fg28_580" x1="0" y1="0" x2="1" y2="1"><stop offset="0" stop-color="#FFE9A6"/><stop offset="1" stop-color="#FFC83D"/></linearGradient></defs><path d="M0 1.2 Q0 0 1.2 0 H7 L9 2 H22 V4 H0Z" fill="#F5B81C"/><rect x="0" y="3" width="22" height="14" rx="0.8" fill="url(#fg28_580)"/><rect x="0" y="16" width="22" height="1" fill="#E9A718"/></svg>
<div class="t" style="left:57px;top:581px;font-size:18px;color:#000;">Flyer &amp;-- Co.sbd</div>
<div class="t" style="left:468px;top:581px;font-size:18px;color:#5C5C5C;letter-spacing:-0.3px">22.03.2022 09:51</div>
<div class="t" style="left:711px;top:581px;font-size:18px;color:#606060;">Dateiordner</div>
<svg style="position:absolute;left:28px;top:627px" width="22" height="17" viewBox="0 0 22 17"><defs><linearGradient id="fg28_627" x1="0" y1="0" x2="1" y2="1"><stop offset="0" stop-color="#FFE9A6"/><stop offset="1" stop-color="#FFC83D"/></linearGradient></defs><path d="M0 1.2 Q0 0 1.2 0 H7 L9 2 H22 V4 H0Z" fill="#F5B81C"/><rect x="0" y="3" width="22" height="14" rx="0.8" fill="url(#fg28_627)"/><rect x="0" y="16" width="22" height="1" fill="#E9A718"/></svg>
<div class="t" style="left:57px;top:628px;font-size:18px;color:#000;">Google Analytics.sbd</div>
<div class="t" style="left:468px;top:628px;font-size:18px;color:#5C5C5C;letter-spacing:-0.3px">22.03.2022 09:51</div>
<div class="t" style="left:711px;top:628px;font-size:18px;color:#606060;">Dateiordner</div>
<svg style="position:absolute;left:28px;top:674px" width="22" height="17" viewBox="0 0 22 17"><defs><linearGradient id="fg28_674" x1="0" y1="0" x2="1" y2="1"><stop offset="0" stop-color="#FFE9A6"/><stop offset="1" stop-color="#FFC83D"/></linearGradient></defs><path d="M0 1.2 Q0 0 1.2 0 H7 L9 2 H22 V4 H0Z" fill="#F5B81C"/><rect x="0" y="3" width="22" height="14" rx="0.8" fill="url(#fg28_674)"/><rect x="0" y="16" width="22" height="1" fill="#E9A718"/></svg>
<div class="t" style="left:57px;top:675px;font-size:18px;color:#000;">Immo.sbd</div>
<div class="t" style="left:468px;top:675px;font-size:18px;color:#5C5C5C;letter-spacing:-0.3px">22.03.2022 09:51</div>
<div class="t" style="left:711px;top:675px;font-size:18px;color:#606060;">Dateiordner</div>
<svg style="position:absolute;left:28px;top:721px" width="22" height="17" viewBox="0 0 22 17"><defs><linearGradient id="fg28_721" x1="0" y1="0" x2="1" y2="1"><stop offset="0" stop-color="#FFE9A6"/><stop offset="1" stop-color="#FFC83D"/></linearGradient></defs><path d="M0 1.2 Q0 0 1.2 0 H7 L9 2 H22 V4 H0Z" fill="#F5B81C"/><rect x="0" y="3" width="22" height="14" rx="0.8" fill="url(#fg28_721)"/><rect x="0" y="16" width="22" height="1" fill="#E9A718"/></svg>
<div class="t" style="left:57px;top:722px;font-size:18px;color:#000;">Kontakte.sbd</div>
<div class="t" style="left:468px;top:722px;font-size:18px;color:#5C5C5C;letter-spacing:-0.3px">12.03.2022 10:54</div>
<div class="t" style="left:711px;top:722px;font-size:18px;color:#606060;">Dateiordner</div>
<svg style="position:absolute;left:28px;top:768px" width="22" height="17" viewBox="0 0 22 17"><defs><linearGradient id="fg28_768" x1="0" y1="0" x2="1" y2="1"><stop offset="0" stop-color="#FFE9A6"/><stop offset="1" stop-color="#FFC83D"/></linearGradient></defs><path d="M0 1.2 Q0 0 1.2 0 H7 L9 2 H22 V4 H0Z" fill="#F5B81C"/><rect x="0" y="3" width="22" height="14" rx="0.8" fill="url(#fg28_768)"/><rect x="0" y="16" width="22" height="1" fill="#E9A718"/></svg>
<div class="t" style="left:57px;top:769px;font-size:18px;color:#000;">Kooperationen.sbd</div>
<div class="t" style="left:468px;top:769px;font-size:18px;color:#5C5C5C;letter-spacing:-0.3px">22.03.2022 09:51</div>
<div class="t" style="left:711px;top:769px;font-size:18px;color:#606060;">Dateiordner</div>
</div>
<div style="position:absolute;left:1479px;top:188px;width:25px;height:785px;background:#F0F0F0"></div>
<div style="position:absolute;left:1486px;top:215px;width:11px;height:143px;background:#858585"></div>
<div style="position:absolute;left:1505px;top:188px;width:2px;height:785px;background:#F3F3F3"></div>
<div class="t" style="left:1545px;top:573px;font-size:17px;color:#6B6B6B;">Wählen Sie eine Datei für die Vorschau aus.</div>
<div class="t" style="left:22px;top:982px;font-size:18px;color:#1F3553;">81 Elemente</div>
<div style="position:absolute;left:135px;top:982px;width:1px;height:17px;background:#EDEDED"></div>
<div style="position:absolute;left:1846px;top:973px;width:31px;height:33px;border:1.2px solid #1E9BE0;background:#CDE8F6"></div>
<div style="position:absolute;left:1852px;top:980px;width:24px;height:24px;border-radius:3px;background:#E6EEF4"></div>
<svg style="position:absolute;left:1852px;top:980px" width="24" height="24" viewBox="0 0 24 24"><path d="M3 4.5 H21 M3 9.5 H21 M3 14.5 H21 M3 19.5 H21" stroke="#000" stroke-width="1.1" stroke-linecap="round"/></svg>
<svg style="position:absolute;left:1884px;top:978px" width="24" height="24" viewBox="0 0 24 24"><rect x="3.6" y="3.4" width="17.2" height="14.4" rx="2" fill="none" stroke="#000" stroke-width="1.1"/><path d="M3.5 20.5 H21" stroke="#000" stroke-width="1.1" stroke-linecap="round"/></svg>
<div style="position:absolute;left:0;top:1008px;width:1920px;height:72px;background:linear-gradient(90deg,#1F1F1F 0%,#202020 31%,#2A2220 34%,#3A2218 41%,#33201A 47%,#392016 54%,#301F1C 62%,#3B2116 70%,#2E201E 73%,#222122 75%,#1F1F1F 100%)"></div>
<div style="position:absolute;left:0;top:1044px;width:1920px;height:36px;background:linear-gradient(180deg,rgba(30,30,34,0) 0%,rgba(30,28,34,0.35) 100%)"></div>
<svg style="position:absolute;left:32px;top:1028px" width="35" height="35" viewBox="0 0 35 35"><defs><linearGradient id="wlg" x1="0" y1="0" x2="1" y2="1"><stop offset="0" stop-color="#9BDDFF"/><stop offset="0.5" stop-color="#3FC1FC"/><stop offset="1" stop-color="#0A97F0"/></linearGradient></defs><path d="M2 0 H16.5 V16.6 H0 V2 Q0 0 2 0Z M18 0 H33 Q35 0 35 2 V16.6 H18Z M0 18.2 H16.5 V35 H2 Q0 35 0 33Z M18 18.2 H35 V33 Q35 35 33 35 H18Z" fill="url(#wlg)"/></svg>
<svg style="position:absolute;left:96px;top:1024px" width="40" height="42" viewBox="0 0 40 42"><line x1="11.5" y1="28.5" x2="5.8" y2="35.8" stroke="#D8D8D8" stroke-width="4.6" stroke-linecap="round"/><circle cx="21.8" cy="18.5" r="12" fill="#3B3B3B" stroke="#DADADA" stroke-width="4"/></svg>
<div style="position:absolute;left:152px;top:1015px;width:59px;height:59px;border-radius:6px;background:#2D2D2D;box-shadow:inset 0 0 0 1px #333"></div>
<svg style="position:absolute;left:164px;top:1029px" width="37" height="33" viewBox="0 0 37 33"><defs><linearGradient id="exg" x1="0" y1="0" x2="1" y2="1"><stop offset="0" stop-color="#FFDB6E"/><stop offset="1" stop-color="#F8BD27"/></linearGradient></defs><path d="M0 2 Q0 0 2 0 H12 L16 3.5 H0Z" fill="#E5A50A"/><path d="M0 5 Q0 3.2 2 3.2 H12 L15.5 1 V3.2 H35 Q36.3 3.2 36.3 5 V32.5 H0Z" fill="url(#exg)"/><path d="M6 25.5 Q6 22 9.5 22 H26.5 Q30 22 30 25.5 V32.5 H6Z" fill="#1A76D2"/><path d="M11 25.5 H25" stroke="#0F4F9A" stroke-width="1.3"/></svg>
<div style="position:absolute;left:170px;top:1069px;width:24px;height:5px;border-radius:3px;background:#5FCBFA"></div>
<svg style="position:absolute;left:230px;top:1027px" width="36" height="36" viewBox="0 0 36 36"><circle cx="17.8" cy="17.9" r="17.3" fill="#1C86D6"/><path d="M9.5 9.5 Q14 9.8 18 12 Q22 9 27.5 9.8 Q22.5 10.8 18.5 14 Q14.2 10.8 9.5 9.5Z" fill="#fff"/><path d="M0.8 22 Q8 19.8 15 21.5 Q23 16.5 32.5 18.2 Q24 19.8 16 26 Q8.5 21.8 0.8 22Z" fill="#fff"/></svg>
<svg style="position:absolute;left:299px;top:1026px" width="30" height="38" viewBox="0 0 30 38"><rect x="0.8" y="0.6" width="28" height="36.4" rx="2.2" fill="#6D7782"/><rect x="0.8" y="0.6" width="28" height="36.4" rx="2.2" fill="none" stroke="#8A939C" stroke-width="0.8"/><rect x="3.8" y="3.6" width="22" height="6" rx="0.6" fill="#4ED3F4"/><g fill="#D9DDE1"><rect x="3.8" y="13.3" width="5.6" height="5.4" rx="1"/><rect x="11.6" y="13.3" width="5.6" height="5.4" rx="1"/><rect x="19.4" y="13.3" width="5.6" height="5.4" rx="1"/><rect x="3.8" y="21" width="5.6" height="5.4" rx="1"/><rect x="11.6" y="21" width="5.6" height="5.4" rx="1"/><rect x="3.8" y="29" width="5.6" height="5.4" rx="1"/><rect x="11.6" y="29" width="5.6" height="5.4" rx="1"/></g><rect x="19.4" y="21" width="5.6" height="13.5" rx="1" fill="#1B4E96"/></svg>
<svg style="position:absolute;left:361px;top:1026px" width="38" height="38" viewBox="0 0 38 38"><defs><linearGradient id="tbg" x1="0.2" y1="0" x2="0.8" y2="1"><stop offset="0" stop-color="#52B4F5"/><stop offset="0.55" stop-color="#2A6CD0"/><stop offset="1" stop-color="#2B3FA8"/></linearGradient></defs><path d="M19 1.2 Q30 1.5 35.5 11 Q38.5 20 35 28.5 Q30 36 21 36.5 Q9 37 3 28 Q-0.5 20 2.5 12 Q7 3 14 1.8Z" fill="url(#tbg)"/><path d="M3 24 Q5 33 14 36 Q6 35 2.5 28Z" fill="#3A2D9E"/><path d="M2 15.5 L16 9.5 L26 17.5 L25.5 32.5 Q15 32.8 4 26 Q1.2 20 2 15.5Z" fill="#F6F7FA"/><path d="M8 17.5 L16.5 23.5 L26 18" fill="none" stroke="#C9CED8" stroke-width="0.9"/><circle cx="15.8" cy="9.8" r="1" fill="#5A3A3A"/></svg>
<div style="position:absolute;left:383.5px;top:1021.5px;width:21px;height:21px;border-radius:50%;background:#E8122C"></div>
<div class="t" style="left:383.5px;top:1022.5px;width:21px;text-align:center;font-size:13.5px;line-height:19px;color:#fff;letter-spacing:-0.5px">15</div>
<div style="position:absolute;left:375.5px;top:1069px;width:10px;height:5px;border-radius:3px;background:#9C9C9C"></div>
<svg style="position:absolute;left:428px;top:1030px" width="36" height="31" viewBox="0 0 36 31"><defs><linearGradient id="lyg" x1="0" y1="0" x2="1" y2="0.3"><stop offset="0" stop-color="#45B3FA"/><stop offset="0.6" stop-color="#1C86F2"/><stop offset="1" stop-color="#0A48E0"/></linearGradient></defs><g fill="url(#lyg)"><path d="M0.3 11 Q0.8 3.2 8 2.8 H28.5 Q33 2.5 34.8 0 Q34.6 7.3 29.5 8.6 H9 Q3 8.8 0.3 11Z"/><path d="M0.3 20.4 Q0.8 12.6 8 12.2 H28.5 Q33 11.9 34.8 9.4 Q34.6 16.7 29.5 18 H9 Q3 18.2 0.3 20.4Z"/><path d="M0.3 29.8 Q0.8 22 8 21.6 H28.5 Q33 21.3 34.8 18.8 Q34.6 26.1 29.5 27.4 H9 Q3 27.6 0.3 29.8Z"/></g></svg>
<div style="position:absolute;left:441.5px;top:1069px;width:10px;height:5px;border-radius:3px;background:#9C9C9C"></div>
<div style="position:absolute;left:495px;top:1027.5px;width:33px;height:32px;border-radius:3.5px;background:#001E36"></div>
<div class="t" style="left:495px;top:1033.5px;width:33px;text-align:center;font-size:19px;line-height:20px;font-weight:bold;color:#31A8FF;letter-spacing:-1.5px">LrC</div>
<svg style="position:absolute;left:561px;top:1028px" width="34" height="34" viewBox="0 0 34 34"><circle cx="16.75" cy="16.6" r="16.6" fill="#DB4437"/><path d="M16.75 16.6 L2.374 8.3 A16.6 16.6 0 0 0 16.75 33.2 Z" fill="#0F9D58"/><path d="M16.75 16.6 L16.75 33.2 A16.6 16.6 0 0 0 31.126 8.3 Z" fill="#F4B400"/><circle cx="16.75" cy="16.6" r="7.6" fill="#fff"/><circle cx="16.75" cy="16.6" r="6" fill="#4285F4"/></svg>
<div style="position:absolute;left:574px;top:1069px;width:9.5px;height:5px;border-radius:3px;background:#9C9C9C"></div>
<svg style="position:absolute;left:1530px;top:1034px" width="24" height="18" viewBox="0 0 24 18"><path d="M3 14 L12 5 L21 14" fill="none" stroke="#EDEDED" stroke-width="1.2"/></svg>
<svg style="position:absolute;left:1565px;top:1033px" width="26" height="22" viewBox="0 0 26 22"><path d="M7 1 L12.6 4.6 L7 8.2 L1.4 4.6Z M18.8 1 L24.4 4.6 L18.8 8.2 L13.2 4.6Z M7 8.2 L12.6 11.8 L7 15.4 L1.4 11.8Z M18.8 8.2 L24.4 11.8 L18.8 15.4 L13.2 11.8Z M12.9 14.3 L18.5 17.8 L12.9 21.3 L7.3 17.8Z" fill="#FFFFFF"/></svg>
<svg style="position:absolute;left:1601px;top:1035px" width="27" height="19" viewBox="0 0 27 19"><path d="M5.5 17.5 Q1 17.5 1 13.3 Q1 9.5 5.2 9.2 Q6 3 12.2 2.6 Q17.5 2.4 19.5 7.5 Q25.5 8 25.5 13 Q25.5 17.5 20.5 17.5Z" fill="#BDBDBD"/><path d="M1 13.5 Q2 10 6 10.5 L13 8 L25.5 14 Q25.5 17.5 20.5 17.5 H5.5 Q1 17.5 1 13.5Z" fill="#F2F2F2"/><path d="M12.2 2.6 Q17.5 2.4 19.5 7.5 L13 8 Q10 5 6 6Z" fill="#9A9A9A"/></svg>
<svg style="position:absolute;left:1642px;top:1033px" width="28" height="22" viewBox="0 0 28 22"><path d="M3 7.8 Q14 -1.8 25 7.8" fill="none" stroke="#fff" stroke-width="1.6"/><path d="M6.5 11.3 Q14 4.5 21.5 11.3" fill="none" stroke="#fff" stroke-width="1.6"/><path d="M10 14.8 Q14 11.2 18 14.8" fill="none" stroke="#fff" stroke-width="1.6"/><circle cx="14" cy="18" r="2" fill="#fff"/></svg>
<svg style="position:absolute;left:1678px;top:1033px" width="28" height="22" viewBox="0 0 28 22"><path d="M3 7.5 H7.5 L13 2.8 V19 L7.5 14.3 H3Z" fill="none" stroke="#fff" stroke-width="1.5" stroke-linejoin="round"/><path d="M16.2 8 Q18 10.9 16.2 13.8" fill="none" stroke="#fff" stroke-width="1.5"/><path d="M19.3 5.5 Q22.8 10.9 19.3 16.3" fill="none" stroke="#fff" stroke-width="1.5"/><path d="M22.5 2.5 Q27.5 10.9 22.5 19.5" fill="none" stroke="#6E6E6E" stroke-width="1.3"/></svg>
<svg style="position:absolute;left:1714px;top:1034px" width="28" height="20" viewBox="0 0 28 20"><rect x="2.9" y="3.4" width="20.5" height="14.2" rx="3" fill="none" stroke="#fff" stroke-width="1.6"/><rect x="5.5" y="6" width="8" height="9" fill="#fff"/><path d="M24.2 7.8 H25.4 Q26.3 7.8 26.3 8.7 V12.3 Q26.3 13.2 25.4 13.2 H24.2Z" fill="#fff"/></svg>
<div class="t" style="left:1740px;top:1023px;width:108px;text-align:right;font-size:17.5px;line-height:20px;color:#fff">07:44</div>
<div class="t" style="left:1740px;top:1046px;width:108px;text-align:right;font-size:17.5px;line-height:20px;color:#fff;letter-spacing:-0.3px">03.04.2022</div>
<div style="position:absolute;left:1866px;top:1032px;width:24px;height:24px;border-radius:50%;background:#60CDFF"></div>
<div class="t" style="left:1866px;top:1034px;width:24px;text-align:center;font-size:15px;line-height:20px;color:#111">7</div>
</body></html>
